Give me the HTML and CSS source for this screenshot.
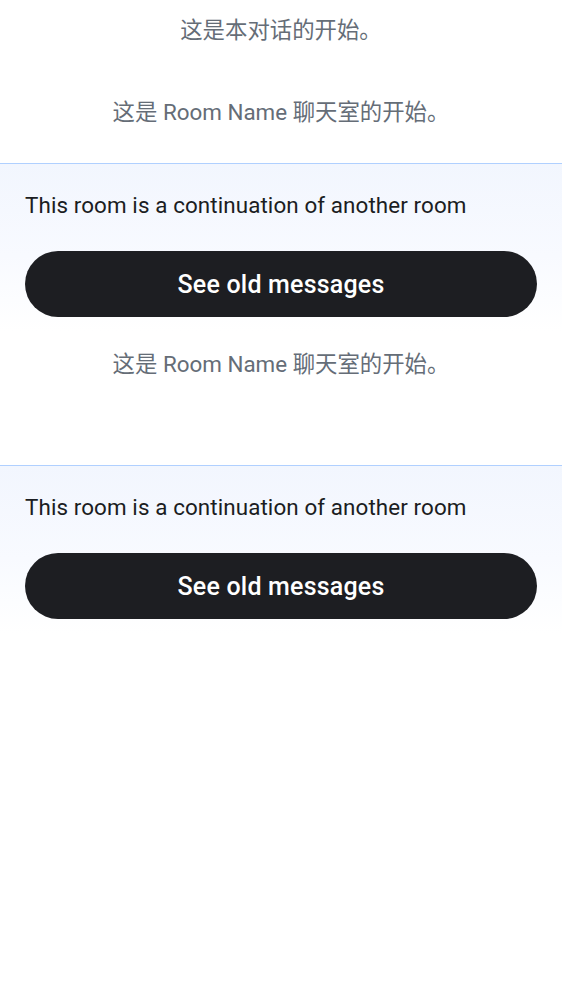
FILE: index.html
```html
<!DOCTYPE html>
<html lang="zh">
<head>
<meta charset="utf-8">
<link rel="stylesheet" href="styles.css">
</head>
<body>
<div class="timeline">
  <div class="notice first">这是本对话的开始。</div>
  <div class="notice second">这是 Room Name 聊天室的开始。</div>
  <div class="predecessor">
    <p class="pred-text">This room is a continuation of another room</p>
    <button class="pred-btn">See old messages</button>
  </div>
  <div class="notice third">这是 Room Name 聊天室的开始。</div>
  <div class="predecessor">
    <p class="pred-text">This room is a continuation of another room</p>
    <button class="pred-btn">See old messages</button>
  </div>
</div>
</body>
</html>
```

FILE: styles.css
```css
* { box-sizing: border-box; }
html, body { margin: 0; padding: 0; background: #ffffff; }
body {
  font-family: Roboto, "Noto Sans CJK SC", sans-serif;
  width: 562px;
  height: 1000px;
}
.timeline { display: flex; flex-direction: column; }
.notice {
  text-align: center;
  color: #656d77;
  font-size: 22.4px;
  line-height: 30px;
}
.first { margin-top: 15px; }
.second { margin-top: 52px; }
.third { margin-top: 18px; }
.predecessor {
  border-top: 1px solid #b0d0ff;
  background: linear-gradient(to bottom, #f2f6fe 0%, #f8faff 55%, #ffffff 100%);
  padding: 26px 25px 14px;
  display: flex;
  flex-direction: column;
}
.second + .predecessor { margin-top: 36px; }
.third + .predecessor { margin-top: 86px; }
.pred-text {
  margin: 0;
  font-size: 22.4px;
  line-height: 30px;
  letter-spacing: 0.1px;
  color: #1b1d22;
}
.pred-btn {
  margin-top: 31px;
  height: 66px;
  border: none;
  border-radius: 33px;
  background: #1d1e22;
  color: #ffffff;
  font-family: Roboto, sans-serif;
  font-weight: 500;
  font-size: 25px;
  letter-spacing: 0.2px;
  width: 100%;
  padding: 0;
}
```
